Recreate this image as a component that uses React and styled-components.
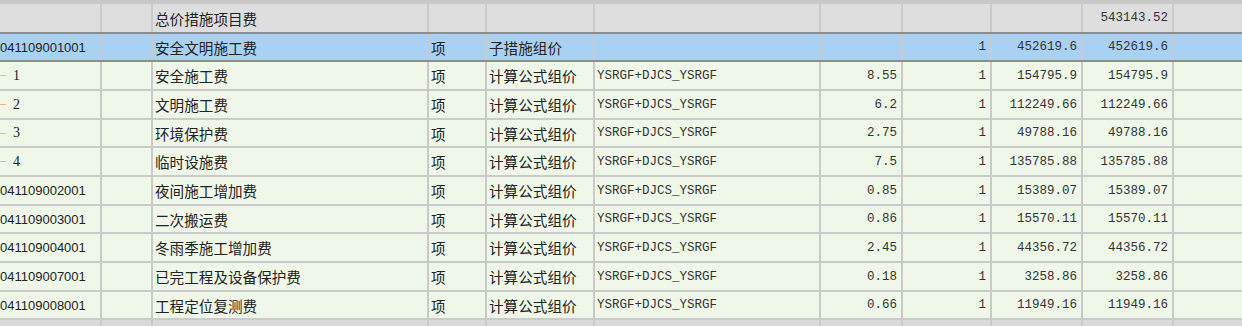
import styled, { createGlobalStyle } from 'styled-components';

const GlobalStyle = createGlobalStyle`
  html, body {
    margin: 0;
    padding: 0;
    background: #d9d9d9;
    overflow: hidden;
  }
`;

const COLS = '102px 51px 276px 58px 108px 226px 82px 89px 91px 91px 1fr';

const Grid = styled.div`
  width: 1242px;
  height: 326px;
  display: flex;
  flex-direction: column;
  border-top: 4px solid #c8c8c8;
  box-sizing: border-box;
  color: #222;
`;

const Row = styled.div`
  display: grid;
  grid-template-columns: ${COLS};
  box-sizing: border-box;
  flex: 0 0 ${(p) => p.$h}px;
  background: ${(p) =>
    p.$kind === 'total' ? '#dedede' : p.$kind === 'sel' ? '#a9d1f3' : '#eff8e8'};
  border-bottom: 2px solid
    ${(p) => (p.$kind === 'total' || p.$kind === 'sel' ? '#8d8d8d' : '#cacaca')};
`;

const Cell = styled.div`
  box-sizing: border-box;
  border-right: 2px solid #cacaca;
  display: flex;
  align-items: center;
  justify-content: ${(p) => (p.$right ? 'flex-end' : 'flex-start')};
  padding: ${(p) => (p.$right ? '0 4px 0 0' : '0 0 0 2px')};
  white-space: nowrap;
  overflow: hidden;
  font-family: ${(p) =>
    p.$mono
      ? '"Liberation Mono", "DejaVu Sans Mono", monospace'
      : p.$code
      ? '"Liberation Sans", Arial, sans-serif'
      : '"Noto Sans CJK SC", "Noto Sans", sans-serif'};
  font-size: ${(p) => (p.$mono ? '12.5px' : p.$code ? '13px' : '14.6px')};
  color: ${(p) => (p.$mono ? '#333' : '#222')};

  &:first-child {
    padding-left: 0;
  }
  &:last-child {
    border-right: none;
  }
`;

const Tree = styled.span`
  display: inline-flex;
  align-items: center;
  font-family: "Liberation Serif", serif;
  font-size: 14px;

  &::before {
    content: '';
    width: 6px;
    height: 1px;
    background: #f3b870;
    margin-right: 7px;
  }
`;

const Filler = styled.div`
  flex: 1;
  background: #d9d9d9;
  display: grid;
  grid-template-columns: ${COLS};

  & > div {
    border-right: 2px solid #cacaca;
  }
`;

const F = 'YSRGF+DJCS_YSRGF';
const U = '项';
const M = '计算公式组价';

const rows = [
  { kind: 'total', h: 30, cells: ['', '', '总价措施项目费', '', '', '', '', '', '', '543143.52'] },
  { kind: 'sel', h: 28, cells: ['041109001001', '', '安全文明施工费', U, '子措施组价', '', '', '1', '452619.6', '452619.6'] },
  { tree: '1', h: 29, cells: ['', '', '安全施工费', U, M, F, '8.55', '1', '154795.9', '154795.9'] },
  { tree: '2', h: 29, cells: ['', '', '文明施工费', U, M, F, '6.2', '1', '112249.66', '112249.66'] },
  { tree: '3', h: 28, cells: ['', '', '环境保护费', U, M, F, '2.75', '1', '49788.16', '49788.16'] },
  { tree: '4', h: 29, cells: ['', '', '临时设施费', U, M, F, '7.5', '1', '135785.88', '135785.88'] },
  { h: 29, cells: ['041109002001', '', '夜间施工增加费', U, M, F, '0.85', '1', '15389.07', '15389.07'] },
  { h: 28, cells: ['041109003001', '', '二次搬运费', U, M, F, '0.86', '1', '15570.11', '15570.11'] },
  { h: 29, cells: ['041109004001', '', '冬雨季施工增加费', U, M, F, '2.45', '1', '44356.72', '44356.72'] },
  { h: 29, cells: ['041109007001', '', '已完工程及设备保护费', U, M, F, '0.18', '1', '3258.86', '3258.86'] },
  { h: 28, cells: ['041109008001', '', '工程定位复测费', U, M, F, '0.66', '1', '11949.16', '11949.16'] },
];

export default function App() {
  return (
    <>
      <GlobalStyle />
      <Grid>
        {rows.map((r, i) => (
          <Row key={i} $kind={r.kind} $h={r.h}>
            <Cell $code>{r.tree ? <Tree>{r.tree}</Tree> : r.cells[0]}</Cell>
            <Cell />
            <Cell>{r.cells[2]}</Cell>
            <Cell>{r.cells[3]}</Cell>
            <Cell>{r.cells[4]}</Cell>
            <Cell $mono>{r.cells[5]}</Cell>
            <Cell $mono $right>{r.cells[6]}</Cell>
            <Cell $mono $right>{r.cells[7]}</Cell>
            <Cell $mono $right>{r.cells[8]}</Cell>
            <Cell $mono $right>{r.cells[9]}</Cell>
            <Cell />
          </Row>
        ))}
        <Filler>
          {Array.from({ length: 10 }).map((_, i) => (
            <div key={i} />
          ))}
        </Filler>
      </Grid>
    </>
  );
}
